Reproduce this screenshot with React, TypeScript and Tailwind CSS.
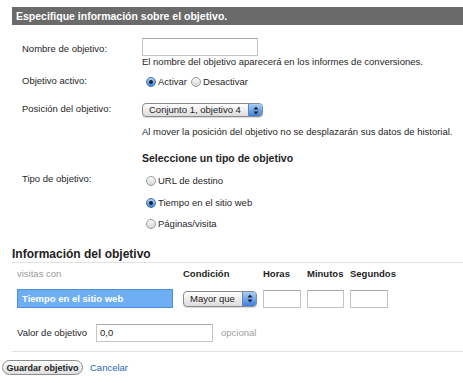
import React from "react";

const Radio = ({ checked }: { checked?: boolean }) =>
  checked ? (
    <span className="flex h-[10px] w-[10px] shrink-0 items-center justify-center rounded-full border border-[#3d6fb0] bg-linear-to-b from-[#b5d6fa] to-[#3f86de]">
      <span className="h-[4px] w-[4px] rounded-full bg-[#1b2330]" />
    </span>
  ) : (
    <span className="h-[10px] w-[10px] shrink-0 rounded-full border border-[#9b9b9b] bg-linear-to-b from-[#fbfbfb] to-[#d6d6d6]" />
  );

const Arrows = () => (
  <svg width="6" height="9" viewBox="0 0 6 9">
    <path d="M3 0.5 L5.5 3.5 L0.5 3.5 Z" fill="#1c1c1c" />
    <path d="M3 8.5 L5.5 5.5 L0.5 5.5 Z" fill="#1c1c1c" />
  </svg>
);

const Select = ({ text, w, h, size }: { text: string; w: string; h: string; size: string }) => (
  <div
    className={`flex ${w} ${h} shrink-0 overflow-hidden rounded-[4px] border border-[#8a8a8a] bg-linear-to-b from-white to-[#dcdcdc] shadow-[0_1px_1px_rgba(0,0,0,0.15)]`}
  >
    <span className={`flex flex-1 items-center whitespace-nowrap pl-[6px] ${size} text-[#1e1e1e]`}>{text}</span>
    <span className="flex w-[14px] items-center justify-center border-l border-[#5b86c2] bg-linear-to-b from-[#a9cff7] to-[#3c80da]">
      <Arrows />
    </span>
  </div>
);

export default function App() {
  return (
    <div className="relative h-[383px] w-[463px] overflow-hidden bg-white font-['Liberation_Sans',Arial,sans-serif] text-[9.5px] leading-[12px] text-[#262626]">
      <div className="pl-[12px] pt-[7px]">
        <div className="flex h-[18px] items-center bg-[#6a6a6a] pl-[4px] text-[10.5px] font-bold text-white">
          Especifique información sobre el objetivo.
        </div>
      </div>

      <div className="pl-[22px]">
        <div className="mt-[13px] flex items-start">
          <div className="w-[120px] pt-[5px]">Nombre de objetivo:</div>
          <div className="flex flex-col">
            <div className="h-[18px] w-[116px] border border-[#c4c4c4] border-t-[#a8a8a8] bg-white" />
            <div>El nombre del objetivo aparecerá en los informes de conversiones.</div>
          </div>
        </div>

        <div className="mt-[7px] flex h-[14px] items-center">
          <div className="w-[120px] -mt-[2px]">Objetivo activo:</div>
          <div className="flex items-center pl-[4px]">
            <Radio checked />
            <span className="ml-[2px] mr-[4px]">Activar</span>
            <Radio />
            <span className="ml-[2px]">Desactivar</span>
          </div>
        </div>

        <div className="mt-[14px] flex h-[14px] items-center">
          <div className="w-[120px] -mt-[3px]">Posición del objetivo:</div>
          <Select text="Conjunto 1, objetivo 4" w="w-[121px]" h="h-[14px]" size="text-[9.5px]" />
        </div>

        <div className="mt-[9px] pl-[120px]">Al mover la posición del objetivo no se desplazarán sus datos de historial.</div>

        <div className="mt-[14px] pl-[120px] text-[10.5px] font-bold text-[#1e1e1e]">Seleccione un tipo de objetivo</div>

        <div className="mt-[10px] flex items-start">
          <div className="w-[120px] leading-[10px]">Tipo de objetivo:</div>
          <div className="flex flex-col pl-[4px]">
            <div className="flex h-[14px] items-center">
              <Radio />
              <span className="ml-[2px]">URL de destino</span>
            </div>
            <div className="mt-[8px] flex h-[14px] items-center">
              <Radio checked />
              <span className="ml-[2px]">Tiempo en el sitio web</span>
            </div>
            <div className="mt-[7px] flex h-[14px] items-center">
              <Radio />
              <span className="ml-[2px]">Páginas/visita</span>
            </div>
          </div>
        </div>
      </div>

      <div className="ml-[12px] mt-[16px] border-b border-[#e2e2e2] pb-[1px] text-[12px] font-bold leading-[14px] text-[#1e1e1e]">
        Información del objetivo
      </div>

      <div className="mt-[5px] flex pl-[17px]">
        <div className="w-[166px] text-[#9a9a9a]">visitas con</div>
        <div className="w-[80px] font-bold text-[#1e1e1e]">Condición</div>
        <div className="w-[44px] font-bold text-[#1e1e1e]">Horas</div>
        <div className="w-[43px] font-bold text-[#1e1e1e]">Minutos</div>
        <div className="font-bold text-[#1e1e1e]">Segundos</div>
      </div>

      <div className="mt-[9px] flex h-[19px] items-center pl-[17px]">
        <div className="flex h-[19px] w-[156px] items-center border border-[#4c8fdb] bg-[#6eaef2] pl-[4px] font-bold text-white">
          Tiempo en el sitio web
        </div>
        <div className="ml-[10px]">
          <Select text="Mayor que" w="w-[74px]" h="h-[16px]" size="text-[9.5px]" />
        </div>
        <div className="ml-[6px] h-[18px] w-[38px] border border-[#c4c4c4] border-t-[#a8a8a8]" />
        <div className="ml-[6px] h-[18px] w-[37px] border border-[#c4c4c4] border-t-[#a8a8a8]" />
        <div className="ml-[6px] h-[18px] w-[38px] border border-[#c4c4c4] border-t-[#a8a8a8]" />
      </div>

      <div className="mt-[16px] flex h-[18px] items-center pl-[17px]">
        <div className="w-[79px]">Valor de objetivo</div>
        <div className="flex h-[18px] w-[117px] items-center border border-[#c4c4c4] border-t-[#a8a8a8] pl-[3px]">0,0</div>
        <div className="ml-[8px] text-[#a0a0a0]">opcional</div>
      </div>

      <div className="ml-[12px] mt-[9px] border-t border-[#e2e2e2]" />

      <div className="mt-[8px] flex h-[15px] items-center pl-[2px]">
        <button className="flex h-[15px] w-[81px] items-center justify-center rounded-full border border-[#8c8c8c] bg-linear-to-b from-white to-[#dedede] text-[9px] font-bold text-[#1e1e1e]">
          Guardar objetivo
        </button>
        <span className="ml-[7px] text-[#2c62b8]">Cancelar</span>
      </div>
    </div>
  );
}
